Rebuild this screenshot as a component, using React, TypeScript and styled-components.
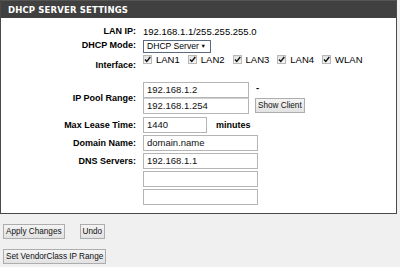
import React from 'react';
import styled, { createGlobalStyle } from 'styled-components';

const GlobalStyle = createGlobalStyle`
  html, body {
    margin: 0;
    padding: 0;
    background-color: #f0f0f0;
  }
  body {
    font-family: "Liberation Sans", Arial, sans-serif;
    font-size: 9.5px;
    color: #000;
  }
`;

const interfaces = ['LAN1', 'LAN2', 'LAN3', 'LAN4', 'WLAN'];

const App = () => {
  return (
    <>
      <GlobalStyle />
      <Page>
        <Panel>
          <PanelHeader>DHCP SERVER SETTINGS</PanelHeader>
          <PanelBody>
            <FormRow>
              <Label>LAN IP:</Label>
              <Value>192.168.1.1/255.255.255.0</Value>
            </FormRow>

            <FormRow $height={15}>
              <Label $offset={1}>DHCP Mode:</Label>
              <Value>
                <Select>
                  DHCP Server
                  <Arrow>▼</Arrow>
                </Select>
              </Value>
            </FormRow>

            <FormRow>
              <Label $offset={6}>Interface:</Label>
              <CheckRow>
                {interfaces.map((name) => (
                  <CheckItem key={name}>
                    <CheckBox>
                      <svg width="7" height="7" viewBox="0 0 7 7">
                        <path d="M1 3.5 L2.8 5.5 L6.3 1" stroke="#111" strokeWidth="1.4" fill="none" />
                      </svg>
                    </CheckBox>
                    {name}
                  </CheckItem>
                ))}
              </CheckRow>
            </FormRow>

            <FormRow $gap={10}>
              <Label $offset={8} $line={16}>IP Pool Range:</Label>
              <PoolRange>
                <Stack>
                  <Input $width={106}>192.168.1.2</Input>
                  <Input $width={106} $joined>192.168.1.254</Input>
                </Stack>
                <Side>
                  <Dash>-</Dash>
                  <Button>Show Client</Button>
                </Side>
              </PoolRange>
            </FormRow>

            <FormRow $gap={3}>
              <Label $line={16}>Max Lease Time:</Label>
              <InlineRow>
                <Input $width={64}>1440</Input>
                <Unit>minutes</Unit>
              </InlineRow>
            </FormRow>

            <FormRow $gap={2}>
              <Label $line={16}>Domain Name:</Label>
              <Value>
                <Input $width={115}>domain.name</Input>
              </Value>
            </FormRow>

            <FormRow $gap={2}>
              <Label $line={16}>DNS Servers:</Label>
              <Stack $gap={2}>
                <Input $width={115}>192.168.1.1</Input>
                <Input $width={115} />
                <Input $width={115} />
              </Stack>
            </FormRow>
          </PanelBody>
        </Panel>
        <Actions>
          <ButtonRow>
            <Button>Apply Changes</Button>
            <Button>Undo</Button>
          </ButtonRow>
          <ButtonRow>
            <Button>Set VendorClass IP Range</Button>
          </ButtonRow>
        </Actions>
      </Page>
    </>
  );
};

const Page = styled.div`
  width: 400px;
  height: 267px;
  overflow: hidden;
`;

const Panel = styled.div`
  width: 397px;
  box-sizing: border-box;
  border: 1px solid #4a4a4a;
  border-top: none;
  background-color: #fff;
`;

const PanelHeader = styled.div`
  height: 18px;
  line-height: 18px;
  background-color: #404040;
  border-top: 1px solid #555;
  box-sizing: border-box;
  color: #fff;
  font-family: "DejaVu Sans", Verdana, sans-serif;
  font-weight: bold;
  font-size: 8.5px;
  padding-left: 7px;
  letter-spacing: 0.15px;
`;

const PanelBody = styled.div`
  padding: 7px 0 8px 0;
`;

const FormRow = styled.div<{ $gap?: number; $height?: number }>`
  display: grid;
  grid-template-columns: 135px 1fr;
  column-gap: 7px;
  align-items: start;
  margin-top: ${(p) => p.$gap ?? 0}px;
  min-height: ${(p) => p.$height ?? 13}px;
`;

const Label = styled.div<{ $offset?: number; $line?: number }>`
  text-align: right;
  font-weight: bold;
  font-size: 9px;
  line-height: ${(p) => p.$line ?? 13}px;
  padding-top: ${(p) => p.$offset ?? 0}px;
`;

const Value = styled.div`
  line-height: 13px;
  font-size: 9.5px;
`;

const Select = styled.div`
  display: flex;
  align-items: center;
  justify-content: space-between;
  width: 68px;
  height: 13px;
  box-sizing: border-box;
  border: 1px solid #5a6a80;
  padding: 0 4px 0 3px;
  font-size: 8.6px;
  line-height: 11px;
  white-space: nowrap;
  margin-top: 2px;
`;

const Arrow = styled.span`
  font-size: 5.5px;
`;

const CheckRow = styled.div`
  display: flex;
  gap: 8px;
  line-height: 13px;
`;

const CheckItem = styled.span`
  display: inline-flex;
  align-items: center;
  gap: 4px;
  font-size: 9.5px;
`;

const CheckBox = styled.span`
  display: inline-flex;
  align-items: center;
  justify-content: center;
  width: 9px;
  height: 9px;
  box-sizing: border-box;
  border: 1px solid #b8b8b8;
  background: linear-gradient(#e2e2e2, #f6f6f6);
`;

const PoolRange = styled.div`
  display: flex;
  gap: 6px;
`;

const Stack = styled.div<{ $gap?: number }>`
  display: flex;
  flex-direction: column;
  gap: ${(p) => p.$gap ?? 0}px;
`;

const Side = styled.div`
  display: flex;
  flex-direction: column;
  align-items: flex-start;
`;

const Dash = styled.span`
  font-weight: bold;
  line-height: 12px;
  padding-left: 1px;
  margin-bottom: 4px;
`;

const Input = styled.div<{ $width: number; $joined?: boolean }>`
  width: ${(p) => p.$width}px;
  height: 16px;
  box-sizing: border-box;
  border: 1px solid #b5b5b5;
  border-top-color: ${(p) => (p.$joined ? '#cfcfcf' : '#b5b5b5')};
  padding-left: 3px;
  font-size: 9.5px;
  line-height: 14px;
  background-color: #fff;
  color: #111;
`;

const InlineRow = styled.div`
  display: flex;
  align-items: center;
  gap: 9px;
`;

const Unit = styled.span`
  font-weight: bold;
  font-size: 9px;
`;

const Button = styled.button`
  height: 15px;
  margin: 0;
  padding: 0 2px;
  border: 1px solid #adadad;
  border-radius: 0;
  background: linear-gradient(#f4f4f4, #e2e2e2);
  font-family: "Liberation Sans", Arial, sans-serif;
  font-size: 8.2px;
  line-height: 13px;
  color: #111;
`;

const Actions = styled.div`
  display: flex;
  flex-direction: column;
  gap: 10px;
  padding: 10px 0 0 3px;
`;

const ButtonRow = styled.div`
  display: flex;
  gap: 15px;
`;

export default App;
